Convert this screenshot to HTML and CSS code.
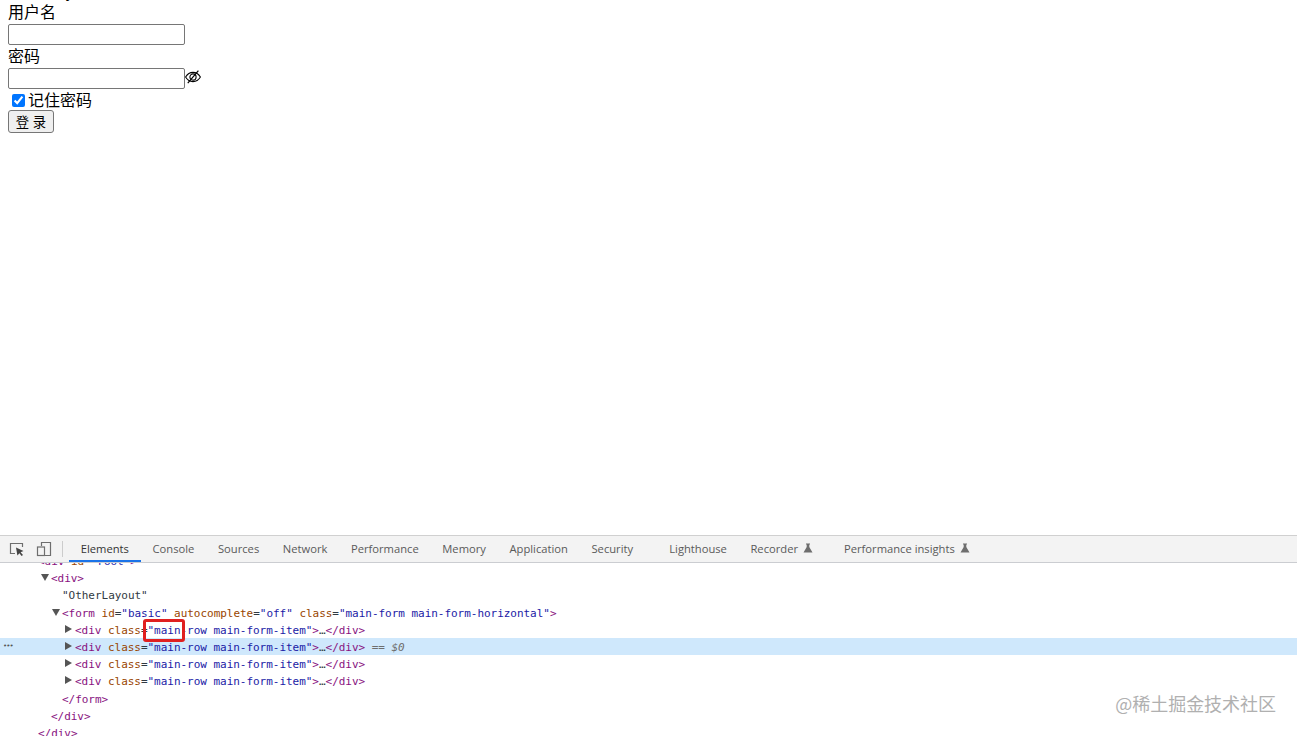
FILE: index.html
```html
<!DOCTYPE html>
<html>
<head>
	<meta charset="utf-8">
	<title>登录</title>
	<link rel="stylesheet" href="styles.css">
</head>
<body>
	<div class="page">
		<div id="root">
			<div class="layoutName">OtherLayout</div>
			<form class="loginForm">
				<div class="formItem">
					<label>用户名</label>
					<div><input type="text" class="textInput"></div>
				</div>
				<div class="formItem">
					<label>密码</label>
					<div class="pwdRow">
						<input type="password" class="textInput">
						<svg class="eyeIcon" viewBox="0 0 16 16" width="16" height="16">
							<path d="M0.6 8C2.4 5 5 3.4 8 3.4S13.6 5 15.4 8C13.6 11 11 12.6 8 12.6S2.4 11 0.6 8Z" fill="none" stroke="#000" stroke-width="1.1"/>
							<circle cx="8" cy="8" r="3.1" fill="none" stroke="#000" stroke-width="1.1"/>
							<path d="M2.8 14.2L13.4 1.6" fill="none" stroke="#000" stroke-width="1.2"/>
						</svg>
					</div>
				</div>
				<div class="formItem">
					<label class="remember"><input type="checkbox" checked>记住密码</label>
				</div>
				<div class="formItem">
					<button type="button" class="loginBtn">登 录</button>
				</div>
			</form>
		</div>

		<div class="devtools">
			<div class="toolbar">
				<svg class="toolIcon" viewBox="0 0 16 16" width="16" height="16">
					<path d="M6 12.5H1.5V2.5H13.5V6" fill="none" stroke="#6e6e6e" stroke-width="1.2"/>
					<path d="M7 6.5L14.5 10L11.6 11.2L14 14L12.6 15L10.4 12.2L8.4 14.4Z" fill="#444"/>
				</svg>
				<svg class="toolIcon" viewBox="0 0 16 16" width="16" height="16">
					<path d="M5.5 5V1.5H14.5V14.5H9" fill="none" stroke="#6e6e6e" stroke-width="1.2"/>
					<rect x="1.5" y="6" width="7" height="8.5" fill="none" stroke="#6e6e6e" stroke-width="1.2"/>
				</svg>
				<span class="toolSep"></span>
				<ul class="tabs">
					<li class="current">Elements</li>
					<li>Console</li>
					<li>Sources</li>
					<li>Network</li>
					<li>Performance</li>
					<li>Memory</li>
					<li>Application</li>
					<li>Security</li>
					<li class="lighthouse">Lighthouse</li>
					<li class="exp">Recorder
						<svg viewBox="0 0 10 10" width="10" height="10"><path d="M3 0.5H7V1.5H6.3V4L9.5 9.5H0.5L3.7 4V1.5H3Z" fill="#6e6e6e"/></svg>
					</li>
					<li class="exp insights">Performance insights
						<svg viewBox="0 0 10 10" width="10" height="10"><path d="M3 0.5H7V1.5H6.3V4L9.5 9.5H0.5L3.7 4V1.5H3Z" fill="#6e6e6e"/></svg>
					</li>
				</ul>
			</div>
			<div class="tree">
				<div class="treeInner">
					<div class="line in1"><span class="tag">&lt;div</span> <span class="attr">id</span>=<span class="val">"root"</span><span class="tag">&gt;</span></div>
					<div class="line in2"><i class="arrow down"></i><span class="tag">&lt;div&gt;</span></div>
					<div class="line in3">"OtherLayout"</div>
					<div class="line in3"><i class="arrow down"></i><span class="tag">&lt;form</span> <span class="attr">id</span>=<span class="val">"basic"</span> <span class="attr">autocomplete</span>=<span class="val">"off"</span> <span class="attr">class</span>=<span class="val">"main-form main-form-horizontal"</span><span class="tag">&gt;</span></div>
					<div class="line in4"><i class="arrow right"></i><span class="tag">&lt;div</span> <span class="attr">class</span>=<span class="val">"main-row main-form-item"</span><span class="tag">&gt;</span>…<span class="tag">&lt;/div&gt;</span></div>
					<div class="line in4 selected"><span class="dots">•••</span><i class="arrow right"></i><span class="tag">&lt;div</span> <span class="attr">class</span>=<span class="val">"main-row main-form-item"</span><span class="tag">&gt;</span>…<span class="tag">&lt;/div&gt;</span> <em>== $0</em></div>
					<div class="line in4"><i class="arrow right"></i><span class="tag">&lt;div</span> <span class="attr">class</span>=<span class="val">"main-row main-form-item"</span><span class="tag">&gt;</span>…<span class="tag">&lt;/div&gt;</span></div>
					<div class="line in4"><i class="arrow right"></i><span class="tag">&lt;div</span> <span class="attr">class</span>=<span class="val">"main-row main-form-item"</span><span class="tag">&gt;</span>…<span class="tag">&lt;/div&gt;</span></div>
					<div class="line in3"><span class="tag">&lt;/form&gt;</span></div>
					<div class="line in2"><span class="tag">&lt;/div&gt;</span></div>
					<div class="line in1"><span class="tag">&lt;/div&gt;</span></div>
				</div>
				<div class="redBox"></div>
				<div class="watermark">@稀土掘金技术社区</div>
			</div>
		</div>
	</div>
</body>
</html>
```

FILE: styles.css
```css
html, body, ul, li{
	padding: 0; margin: 0;
}
body{
	background: #fff;
	color: #000;
	font: 16px/23px "Liberation Sans", "Noto Sans CJK SC", sans-serif;
	overflow: hidden;
}
.page{
	height: 736px;
	display: flex;
	flex-direction: column;
	overflow: hidden;
}
/*页面被滚动过, 第一行只露出一点*/
#root{
	flex: 1;
	min-height: 0;
	margin-top: -16px;
	padding: 0 8px;
}
.layoutName{
	height: 17px;
	line-height: 18px;
}
.textInput{
	width: 177px;
	height: 21px;
	box-sizing: border-box;
	margin: 0;
	padding: 1px 2px;
	border: 1px solid #767676;
	border-radius: 2px;
	display: block;
}
.pwdRow{
	display: flex;
	align-items: flex-start;
}
.eyeIcon{
	display: block;
	margin-top: 1px;
}
.remember{
	display: flex;
	align-items: center;
	height: 21px;
	box-sizing: border-box;
	padding-top: 2px;
}
.remember input{
	margin: 3px 3px 3px 4px;
	width: 13px;
	height: 13px;
}
.loginBtn{
	width: 46px;
	height: 23px;
	padding: 0;
	font: 13.33px "Liberation Sans", "Noto Sans CJK SC", sans-serif;
	color: #000;
	background: #efefef;
	border: 1px solid #767676;
	border-radius: 3px;
	display: block;
}
.devtools{
	height: 201px;
	flex: none;
	display: flex;
	flex-direction: column;
}
.toolbar{
	height: 26px;
	flex: none;
	background: #f3f3f3;
	border-top: 1px solid #d0d0d0;
	border-bottom: 1px solid #cbcdd1;
	display: flex;
	align-items: center;
	padding-left: 9px;
	color: #5a5a5a;
}
.toolIcon{
	margin-right: 11px;
	flex: none;
}
.toolSep{
	width: 1px;
	height: 16px;
	background: #ccc;
	margin-left: -1px;
}
.tabs{
	list-style-type: none;
	display: flex;
	height: 100%;
	margin-left: 6px;
	font: 11.2px/26px "Open Sans", "Liberation Sans", sans-serif;
}
.tabs li{
	padding: 0 11.8px;
	white-space: nowrap;
}
.tabs li.current{
	color: #333;
	box-shadow: inset 0 -2px 0 #1a73e8;
}
.tabs li.lighthouse{
	margin-left: 12.5px;
}
.tabs li.insights{
	margin-left: 7.5px;
}
.tabs li svg{
	margin-left: 2px;
}
.tree{
	flex: 1;
	min-height: 0;
	position: relative;
	overflow: hidden;
	font: 11px/17.2px "DejaVu Sans Mono", monospace;
	letter-spacing: -0.03px;
	color: #303942;
}
.treeInner{
	margin-top: -10px;
}
.line{
	white-space: pre;
	position: relative;
}
.in1{
	padding-left: 38px;
}
.in2{
	padding-left: 51px;
}
.in3{
	padding-left: 62px;
}
.in4{
	padding-left: 75px;
}
.selected{
	margin-top: -1px;
	padding-top: 1px;
	background: linear-gradient(#cfe8fc, #cfe8fc) top / 100% 17px no-repeat;
}
.tag{
	color: #881280;
}
.attr{
	color: #994500;
}
.val{
	color: #1a1aa6;
}
.line em{
	color: #6e6e6e;
}
.dots{
	position: absolute;
	left: 3px;
	top: 0;
	font-size: 7px;
	letter-spacing: -1px;
	color: #555;
}
.arrow{
	display: inline-block;
	width: 0;
	height: 0;
	margin-left: -10px;
	margin-right: 2px;
	vertical-align: 1px;
}
.arrow.down{
	border-left: 4px solid transparent;
	border-right: 4px solid transparent;
	border-top: 7px solid #555;
}
.arrow.right{
	border-top: 4px solid transparent;
	border-bottom: 4px solid transparent;
	border-left: 7px solid #555;
	margin-right: 3px;
}
.redBox{
	position: absolute;
	left: 143px;
	top: 56px;
	width: 42px;
	height: 23px;
	box-sizing: border-box;
	border: 3px solid #e02020;
	border-radius: 3px;
}
.watermark{
	position: absolute;
	right: 21px;
	bottom: 22px;
	font: 18px/22px "Noto Sans CJK SC", sans-serif;
	color: #b0b0b0;
}
```
